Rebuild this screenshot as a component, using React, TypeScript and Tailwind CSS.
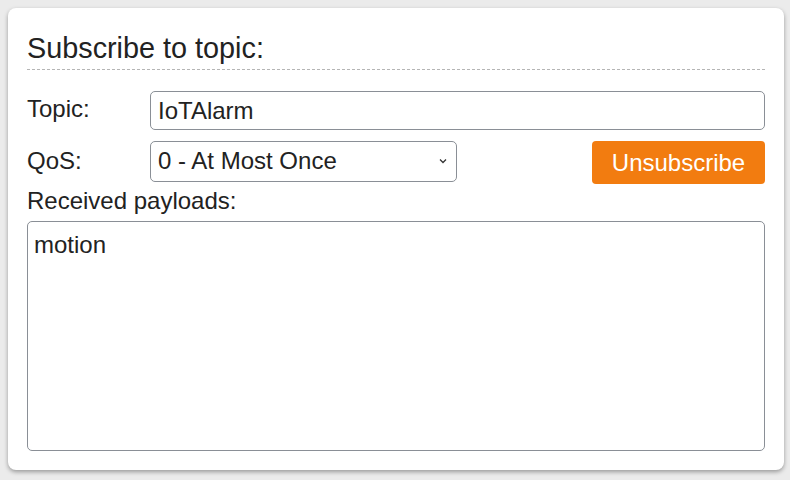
export default function App() {
  return (
    <div className="h-[480px] w-[790px] bg-[#ebebeb] p-[8px] pr-[6px] pb-[10px] font-['Liberation_Sans',Arial,sans-serif] text-[#222]">
      <div className="flex h-full flex-col rounded-[8px] bg-white px-[19px] pt-[20px] pb-[19px] shadow-[0_2px_4px_rgba(0,0,0,0.35)]">
        <h2 className="text-[28.8px] leading-[40px]">Subscribe to topic:</h2>
        <div className="mt-[1px] border-t border-dashed border-[#b5b5b5]" />

        <div className="mt-[21px] flex items-center">
          <label className="w-[123px] pb-[3px] text-[24px] leading-[28px]">Topic:</label>
          <input
            defaultValue="IoTAlarm"
            className="h-[39px] flex-1 rounded-[5px] border border-[#8a8f96] px-[7px] text-[24px] outline-none"
          />
        </div>

        <div className="mt-[11px] flex items-center">
          <label className="w-[123px] pb-[3px] text-[24px] leading-[28px]">QoS:</label>
          <div className="relative h-[41px] w-[307px] self-start rounded-[5px] border border-[#8a8f96]">
            <span className="absolute left-[7px] top-[5px] text-[24px] leading-[28px]">0 - At Most Once</span>
            <svg className="absolute right-[9px] top-[16px]" width="8" height="6" viewBox="0 0 8 6">
              <path d="M1 1.5 L4 4.5 L7 1.5" fill="none" stroke="#333" strokeWidth="1.3" />
            </svg>
          </div>
          <div className="flex-1" />
          <button className="h-[43px] w-[173px] rounded-[4px] bg-[#f27c10] text-[24px] text-white">
            Unsubscribe
          </button>
        </div>

        <div className="mt-[3px] text-[24px] leading-[28px]">Received payloads:</div>
        <div className="mt-[6px] flex-1 rounded-[5px] border border-[#8a8f96] px-[6px] py-[9px] text-[24px] leading-[28px]">
          motion
        </div>
      </div>
    </div>
  );
}
